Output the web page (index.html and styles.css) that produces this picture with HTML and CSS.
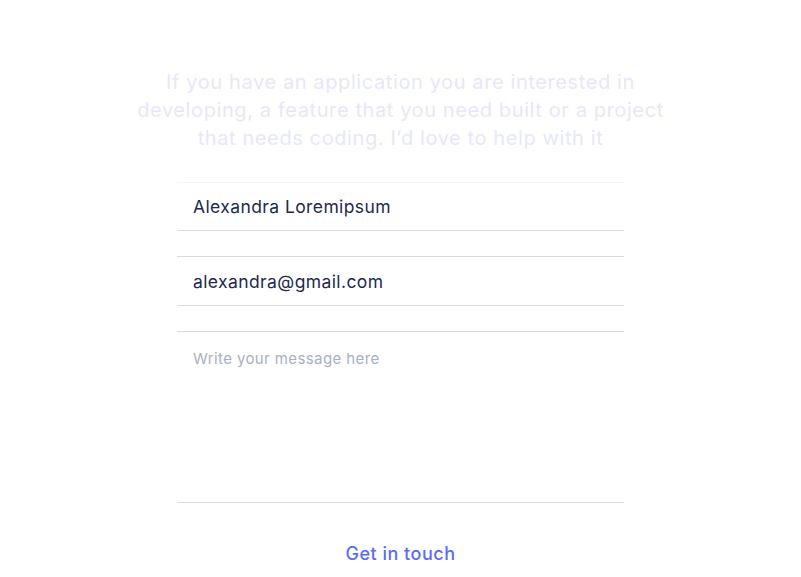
FILE: index.html
```html
<!DOCTYPE html>
<html>
<head>
<meta charset="utf-8">
<link rel="stylesheet" href="styles.css">
</head>
<body>
<main class="contact">
  <p class="intro">If you have an application you are interested in developing, a feature that you need built or a project that needs coding. I’d love to help with it</p>
  <form class="form">
    <input class="field field-first" type="text" value="Alexandra Loremipsum">
    <input class="field field-second" type="email" value="alexandra@gmail.com">
    <textarea class="field field-area" placeholder="Write your message here"></textarea>
    <button class="submit" type="button">Get in touch</button>
  </form>
</main>
</body>
</html>
```
FILE: styles.css
```css
* { box-sizing: border-box; }
html, body { margin: 0; background: #fff; }
body { font-family: "Inter", "Open Sans", sans-serif; }
.contact {
  display: flex;
  flex-direction: column;
  align-items: center;
  padding-top: 68px;
}
.intro {
  margin: 0;
  width: 532px;
  text-align: center;
  font-size: 20px;
  letter-spacing: 0.6px;
  line-height: 28px;
  color: #e7e7fb;
}
.form {
  margin-top: 30px;
  width: 447px;
  display: flex;
  flex-direction: column;
  gap: 25px;
}
.field {
  display: block;
  width: 100%;
  height: 49px;
  border: none;
  border-top: 1px solid #d3dbe3;
  border-bottom: 1px solid #d3dbe3;
  padding: 0 16px;
  font-family: inherit;
  font-size: 17.5px;
  letter-spacing: 0.4px;
  color: #1b2a4e;
  background: #fff;
  outline: none;
}
.field-first { border-top-color: #f4f6f8; }
.field-second { height: 50px; }
.field-area {
  height: 172px;
  padding: 17px 16px;
  resize: none;
  font-size: 15px;
}
.field-area::placeholder { color: #a9b0bf; }
.submit {
  align-self: center;
  margin-top: 15px;
  border: none;
  background: none;
  font-family: inherit;
  font-size: 18px;
  font-weight: 500;
  color: #5a6cf4;
  padding: 0;
  letter-spacing: 0.5px;
}
```
